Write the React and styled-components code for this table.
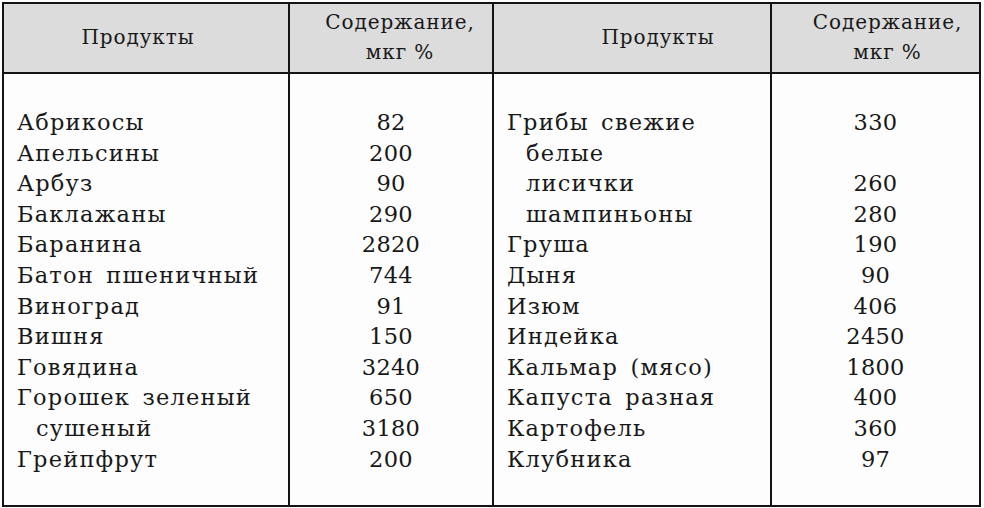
import React from "react";
import styled, { createGlobalStyle } from "styled-components";

const Global = createGlobalStyle`
  html, body { margin: 0; padding: 0; background: #fdfdfd; }
  #root { width: 984px; height: 508px; }
`;

const Table = styled.div`
  box-sizing: border-box;
  margin: 2px 0 0 2px;
  width: 979px;
  height: 505px;
  border: 2px solid #141414;
  display: grid;
  grid-template-columns: 286px 204px 278px 1fr;
  grid-template-rows: 70px 1fr;
  font-family: "DejaVu Serif", "Liberation Serif", serif;
  color: #181818;
`;

const HeadCell = styled.div`
  box-sizing: border-box;
  background: #dcdcdc;
  border-bottom: 2px solid #141414;
  border-right: ${(p) => (p.$last ? "none" : "2px solid #141414")};
  display: flex;
  align-items: center;
  justify-content: center;
  text-align: center;
  font-size: 20px;
  letter-spacing: 0.9px;
  line-height: 30px;
  padding: 0 ${(p) => (p.$dx < 0 ? -2 * p.$dx : 0)}px 2px
    ${(p) => (p.$dx > 0 ? 2 * p.$dx : 0)}px;
`;

const BodyCell = styled.div`
  box-sizing: border-box;
  background: #fdfdfd;
  border-right: ${(p) => (p.$last ? "none" : "2px solid #141414")};
  padding: 33px 0 0 ${(p) => (p.$num ? 0 : 13)}px;
  display: flex;
  flex-direction: column;
  align-items: ${(p) => (p.$num ? "center" : "flex-start")};
  font-size: 22.5px;
  letter-spacing: ${(p) => (p.$num ? 0.3 : 1.2)}px;
  word-spacing: 4px;
  line-height: 30.6px;
`;

const Line = styled.div`
  height: 30.6px;
  white-space: pre;
  padding-left: ${(p) => (p.$indent ? 19 : 0)}px;
`;

const left = [
  ["Абрикосы", "82"],
  ["Апельсины", "200"],
  ["Арбуз", "90"],
  ["Баклажаны", "290"],
  ["Баранина", "2820"],
  ["Батон пшеничный", "744"],
  ["Виноград", "91"],
  ["Вишня", "150"],
  ["Говядина", "3240"],
  ["Горошек зеленый", "650"],
  ["сушеный", "3180", true],
  ["Грейпфрут", "200"],
];

const right = [
  ["Грибы свежие", "330"],
  ["белые", "", true],
  ["лисички", "260", true],
  ["шампиньоны", "280", true],
  ["Груша", "190"],
  ["Дыня", "90"],
  ["Изюм", "406"],
  ["Индейка", "2450"],
  ["Кальмар (мясо)", "1800"],
  ["Капуста разная", "400"],
  ["Картофель", "360"],
  ["Клубника", "97"],
];

const Names = ({ rows }) => (
  <BodyCell>
    {rows.map(([n, , i], k) => (
      <Line key={k} $indent={i}>{n}</Line>
    ))}
  </BodyCell>
);

const Values = ({ rows, last }) => (
  <BodyCell $num $last={last}>
    {rows.map(([, v], k) => (
      <Line key={k}>{v}</Line>
    ))}
  </BodyCell>
);

export default function App() {
  return (
    <>
      <Global />
      <Table>
        <HeadCell $dx={-8}>Продукты</HeadCell>
        <HeadCell $dx={9}>
          Содержание,
          <br />
          мкг %
        </HeadCell>
        <HeadCell $dx={26}>Продукты</HeadCell>
        <HeadCell $dx={12} $last>
          Содержание,
          <br />
          мкг %
        </HeadCell>
        <Names rows={left} />
        <Values rows={left} />
        <Names rows={right} />
        <Values rows={right} last />
      </Table>
    </>
  );
}
